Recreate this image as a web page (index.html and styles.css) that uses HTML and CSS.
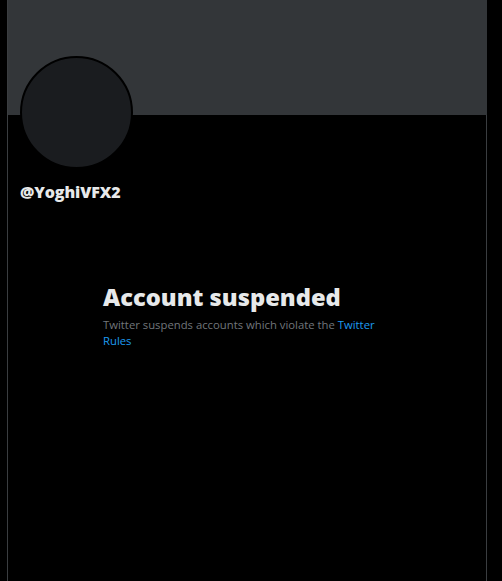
FILE: index.html
```html
<!DOCTYPE html>
<html>
<head>
<meta charset="utf-8">
<link rel="stylesheet" href="styles.css">
</head>
<body>
<div class="column">
  <div class="banner"></div>
  <div class="profile">
    <div class="avatar"></div>
    <div class="handle">@YoghiVFX2</div>
  </div>
  <div class="notice">
    <h1 class="title">Account suspended</h1>
    <p class="desc">Twitter suspends accounts which violate the <a class="link">Twitter Rules</a></p>
  </div>
</div>
</body>
</html>
```
FILE: styles.css
```css
html, body {
  margin: 0;
  padding: 0;
  background: #000;
  height: 100%;
  overflow: hidden;
}
body {
  font-family: "Open Sans", "Noto Sans", sans-serif;
}
.column {
  margin-left: 7px;
  width: 478px;
  min-height: 100%;
  border-left: 1px solid #3a3d40;
  border-right: 1px solid #3a3d40;
}
.banner {
  height: 115px;
  background: #333639;
  margin-right: -1px;
}
.profile {
  padding-left: 12px;
}
.avatar {
  width: 109px;
  height: 109px;
  margin-top: -59px;
  border-radius: 50%;
  border: 2px solid #000;
  background: #1a1c1f;
}
.handle {
  margin-top: 13px;
  color: #e7e9ea;
  font-weight: 800;
  font-size: 16px;
  line-height: 20px;
  letter-spacing: -0.1px;
}
.notice {
  margin: 80px 0 0 95px;
  width: 290px;
}
.title {
  margin: 0;
  color: #e7e9ea;
  font-weight: 800;
  font-size: 23.7px;
  line-height: 30px;
}
.desc {
  margin: 5px 0 0;
  color: #71767b;
  font-size: 11.3px;
  line-height: 16px;
}
.link {
  color: #1d9bf0;
}
```
